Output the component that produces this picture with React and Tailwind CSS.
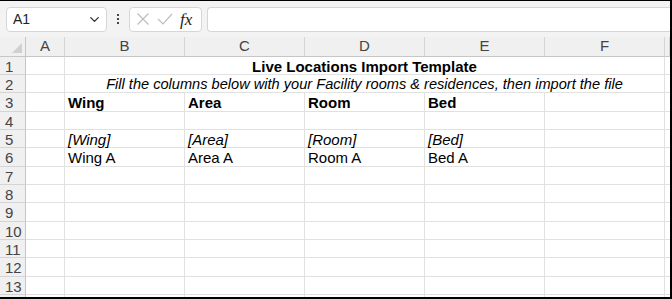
import { ChevronDown } from "lucide-react";

const cols = ["A", "B", "C", "D", "E", "F", ""];
const colWidths = "26px 39px 120px 120px 120px 120px 120px 1fr";

// Excel rows render at ~18.3px, so every third row is a pixel taller
const rows = [
  { n: 1, h: "h-[18px]", merged: "Live Locations Import Template", style: "font-bold text-[15px]" },
  { n: 2, h: "h-[18px]", merged: "Fill the columns below with your Facility rooms & residences, then import the file", style: "italic text-[14.6px]" },
  { n: 3, h: "h-[19px]", cells: ["Wing", "Area", "Room", "Bed"], style: "font-bold text-[15px]" },
  { n: 4, h: "h-[18px]", cells: [] },
  { n: 5, h: "h-[18px]", cells: ["[Wing]", "[Area]", "[Room]", "[Bed]"], style: "italic text-[15px]" },
  { n: 6, h: "h-[19px]", cells: ["Wing A", "Area A", "Room A", "Bed A"], style: "text-[15px]" },
  { n: 7, h: "h-[18px]", cells: [] },
  { n: 8, h: "h-[18px]", cells: [] },
  { n: 9, h: "h-[19px]", cells: [] },
  { n: 10, h: "h-[18px]", cells: [] },
  { n: 11, h: "h-[18px]", cells: [] },
  { n: 12, h: "h-[19px]", cells: [] },
  { n: 13, h: "h-[18px]", cells: [] },
  { n: 14, h: "h-[18px]", cells: [] },
];

function Toolbar() {
  return (
    <div className="flex items-center h-[36px] bg-[#f3f3f3] pl-[6px] gap-[5px]">
      <div className="flex items-center justify-between w-[101px] h-[25px] bg-white border border-[#d6d6d6] rounded-[4px] pl-[6px] pr-[4px]">
        <span className="text-[14px] text-[#222]">A1</span>
        <ChevronDown size={15} strokeWidth={2.2} className="text-[#333]" />
      </div>
      <div className="flex flex-col gap-[2px] w-[12px] items-center">
        <span className="w-[2px] h-[2px] bg-[#444]" />
        <span className="w-[2px] h-[2px] bg-[#444]" />
        <span className="w-[2px] h-[2px] bg-[#444]" />
      </div>
      <div className="flex items-center gap-[7px] w-[73px] h-[25px] bg-white border border-[#d6d6d6] rounded-[4px] pl-[6px]">
        <svg width="14" height="14" viewBox="0 0 14 14">
          <path d="M1.5 1.5 L12.5 12.5 M12.5 1.5 L1.5 12.5" stroke="#bdbdbd" strokeWidth="1.2" fill="none" />
        </svg>
        <svg width="16" height="14" viewBox="0 0 16 14">
          <path d="M1 7 L6 12 L15 2" stroke="#bdbdbd" strokeWidth="1.2" fill="none" />
        </svg>
        <span className="text-[17px] leading-none italic text-[#222] font-['Liberation_Serif',serif]">fx</span>
      </div>
      <div className="flex-1 h-[25px] bg-white border border-[#d6d6d6] rounded-l-[4px] border-r-0" />
    </div>
  );
}

function Row({ r }) {
  const cellBase = `${r.h} border-r border-b border-[#e1e1e1] pt-[1px] leading-[17px] text-black whitespace-nowrap`;
  return (
    <>
      <div className={`${r.h} bg-[#f0f0f0] border-r border-b border-[#d4d4d4] border-r-[#c6c6c6] pl-[5px] pt-[1px] text-[15px] leading-[17px] text-[#444]`}>
        {r.n}
      </div>
      <div className={cellBase} />
      {r.merged ? (
        <div className={`${cellBase} col-span-5 text-center ${r.style}`}>{r.merged}</div>
      ) : (
        [0, 1, 2, 3, 4].map((i) => (
          <div key={i} className={`${cellBase} pl-[3px] ${r.style || ""}`}>
            {r.cells[i] || ""}
          </div>
        ))
      )}
      <div className={`${r.h} border-b border-[#e1e1e1]`} />
    </>
  );
}

function Sheet() {
  return (
    <div className="grid bg-white" style={{ gridTemplateColumns: colWidths }}>
      {/* corner */}
      <div className="relative h-[20px] bg-[#f0f0f0] border-r border-b border-[#c6c6c6]">
        <svg className="absolute right-[3px] bottom-[3px]" width="10" height="10" viewBox="0 0 10 10">
          <path d="M10 0 L10 10 L0 10 Z" fill="#d0d0d0" />
        </svg>
      </div>
      {cols.map((c, i) => (
        <div
          key={i}
          className="h-[20px] bg-[#f0f0f0] border-r border-b border-[#d4d4d4] border-b-[#c6c6c6] flex items-center justify-center text-[15px] text-[#444] last:border-r-0"
        >
          {c}
        </div>
      ))}
      {rows.map((r) => (
        <Row key={r.n} r={r} />
      ))}
    </div>
  );
}

export default function App() {
  return (
    <div className="w-[672px] h-[299px] overflow-hidden relative bg-white font-['Liberation_Sans',Arial,sans-serif] border-t border-r-2 border-b-2 border-black">
      <Toolbar />
      <Sheet />
    </div>
  );
}
